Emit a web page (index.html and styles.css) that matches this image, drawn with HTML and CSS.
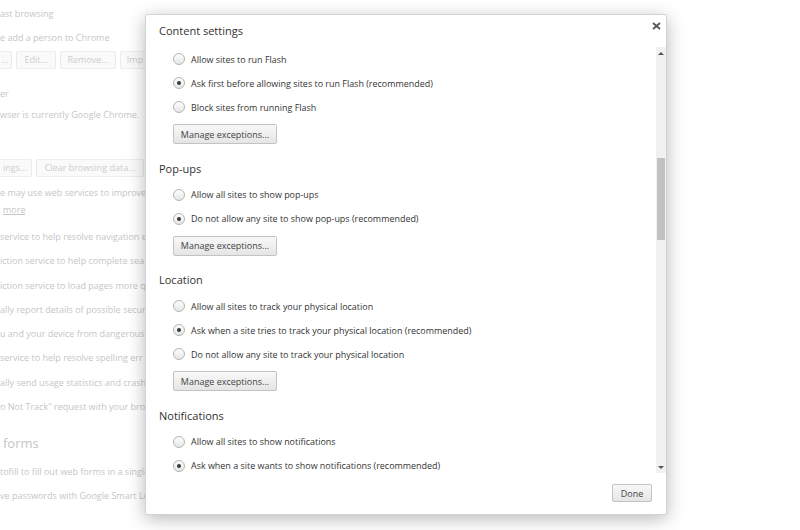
FILE: index.html
```html
<!DOCTYPE html>
<html lang="en">
<head>
    <meta charset="UTF-8">
    <title>Settings - Content settings</title>
    <link rel="stylesheet" href="styles.css">
</head>
<body>

    <div class="page">
        <div class="line first">ast browsing</div>
        <div class="line">e add a person to Chrome</div>
        <div class="btn-row">
            <span class="pbtn w12">...</span>
            <span class="pbtn w40">Edit...</span>
            <span class="pbtn w56">Remove...</span>
            <span class="pbtn w30">Imp</span>
        </div>
        <div class="line gap-lg">er</div>
        <div class="line tight">wser is currently Google Chrome.</div>
        <div class="btn-row second">
            <span class="pbtn w32">ings...</span>
            <span class="pbtn w108">Clear browsing data...</span>
        </div>
        <div class="para">
            <div>e may use web services to improve</div>
            <div><span class="link">more</span></div>
        </div>
        <div class="list">
            <div class="line">service to help resolve navigation e</div>
            <div class="line">iction service to help complete sea</div>
            <div class="line">iction service to load pages more q</div>
            <div class="line">ally report details of possible secur</div>
            <div class="line">u and your device from dangerous</div>
            <div class="line">service to help resolve spelling err</div>
            <div class="line">ally send usage statistics and crash</div>
            <div class="line">o Not Track" request with your brow</div>
        </div>
        <div class="page-heading">forms</div>
        <div class="line after-heading">tofill to fill out web forms in a single</div>
        <div class="line">ve passwords with Google Smart Lo</div>
    </div>

    <div class="dialog">
        <div class="dialog-head">
            <h1>Content settings</h1>
            <span class="close">
                <svg width="9" height="8" viewBox="0 0 9 8">
                    <path d="M1 1 L8 7 M8 1 L1 7" stroke="#555" stroke-width="1.8" fill="none"/>
                </svg>
            </span>
        </div>
        <div class="dialog-body">
            <div class="scroll">
                <div class="options">
                    <label class="opt"><span class="radio"></span>Allow sites to run Flash</label>
                    <label class="opt"><span class="radio checked"></span>Ask first before allowing sites to run Flash (recommended)</label>
                    <label class="opt"><span class="radio"></span>Block sites from running Flash</label>
                    <button class="btn manage">Manage exceptions...</button>
                </div>

                <h2>Pop-ups</h2>
                <div class="options">
                    <label class="opt"><span class="radio"></span>Allow all sites to show pop-ups</label>
                    <label class="opt"><span class="radio checked"></span>Do not allow any site to show pop-ups (recommended)</label>
                    <button class="btn manage">Manage exceptions...</button>
                </div>

                <h2>Location</h2>
                <div class="options">
                    <label class="opt"><span class="radio"></span>Allow all sites to track your physical location</label>
                    <label class="opt"><span class="radio checked"></span>Ask when a site tries to track your physical location (recommended)</label>
                    <label class="opt"><span class="radio"></span>Do not allow any site to track your physical location</label>
                    <button class="btn manage">Manage exceptions...</button>
                </div>

                <h2>Notifications</h2>
                <div class="options">
                    <label class="opt"><span class="radio"></span>Allow all sites to show notifications</label>
                    <label class="opt"><span class="radio checked"></span>Ask when a site wants to show notifications (recommended)</label>
                </div>
            </div>
            <div class="scrollbar">
                <div class="arrow up"></div>
                <div class="track"><div class="thumb"></div></div>
                <div class="arrow down"></div>
            </div>
        </div>
        <div class="dialog-foot">
            <button class="btn done">Done</button>
        </div>
    </div>

</body>
</html>
```

FILE: styles.css
```css
body {
    margin: 0;
    font-family: 'Open Sans', 'Noto Sans', sans-serif;
    background: #fff;
    width: 800px;
    height: 530px;
    overflow: hidden;
}

/* faded settings page behind the dialog */
.page {
    padding-top: 4px;
    color: #c6c6c6;
    font-size: 9px;
    white-space: nowrap;
}

.line {
    line-height: 20px;
    margin-top: 4px;
}

.line.first {
    margin-top: 0;
}

.line.gap-lg {
    margin-top: 15px;
}

.line.tight {
    margin-top: 1px;
}

.line.after-heading {
    margin-top: 7px;
}

.btn-row {
    display: flex;
    gap: 4px;
    margin-top: 3px;
    margin-left: -2px;
}

.btn-row.second {
    margin-top: 34px;
}

.pbtn {
    height: 18px;
    line-height: 16px;
    box-sizing: border-box;
    border: 1px solid #ececec;
    border-radius: 2px;
    background: #fafafa;
    text-align: center;
    color: #cdcdcd;
}

.w12 { width: 14px; }
.w40 { width: 40px; }
.w56 { width: 56px; }
.w30 { width: 30px; }
.w32 { width: 34px; }
.w108 { width: 108px; }

.para {
    line-height: 17px;
    margin-top: 7px;
}

.link {
    text-decoration: underline;
    margin-left: 3px;
}

.list {
    margin-top: 7px;
}

.list .line {
    line-height: 24.3px;
    margin-top: 0;
}

.page-heading {
    font-size: 13px;
    line-height: 24px;
    margin-top: 12px;
    margin-left: 3px;
}

/* dialog */
.dialog {
    position: absolute;
    left: 145px;
    top: 14px;
    width: 522px;
    height: 501px;
    box-sizing: border-box;
    background: #fff;
    border: 1px solid #d2d2d2;
    border-radius: 2px;
    box-shadow: 0 4px 18px rgba(0, 0, 0, 0.28);
    display: flex;
    flex-direction: column;
    color: #333;
}

.dialog-head {
    height: 32px;
    display: flex;
    align-items: center;
    justify-content: space-between;
    padding: 0 3px 0 13px;
}

.dialog-head h1 {
    margin: 0 0 2px;
    font-size: 11px;
    font-weight: normal;
    color: #333;
}

.close {
    width: 14px;
    height: 14px;
    display: flex;
    align-items: center;
    justify-content: center;
    margin-top: -11px;
}

.dialog-body {
    flex: 1;
    display: flex;
    min-height: 0;
}

.scroll {
    flex: 1;
    overflow: hidden;
    padding-left: 13px;
}

.options {
    padding-left: 14px;
}

.opt {
    display: flex;
    align-items: center;
    height: 24px;
    font-size: 8.95px;
    color: #333;
    white-space: nowrap;
}

.radio {
    width: 12px;
    height: 12px;
    box-sizing: border-box;
    border: 1px solid #b5b5b5;
    border-radius: 50%;
    background: linear-gradient(#fefefe, #e6e6e6);
    margin-right: 6px;
    display: flex;
    align-items: center;
    justify-content: center;
}

.radio.checked::after {
    content: '';
    width: 4px;
    height: 4px;
    border-radius: 50%;
    background: #3a3a3a;
}

.btn {
    font-family: inherit;
    font-size: 9px;
    color: #444;
    border: 1px solid #c3c3c3;
    border-radius: 2px;
    background: linear-gradient(#f8f8f8, #e5e5e5);
    padding: 0;
}

.manage {
    width: 104px;
    height: 20px;
    margin-top: 5px;
}

h2 {
    margin: 14.5px 0 4px;
    font-size: 11px;
    line-height: 20px;
    font-weight: normal;
    color: #333;
}

.scrollbar {
    width: 10px;
    background: #f1f1f1;
    display: flex;
    flex-direction: column;
}

.arrow {
    height: 12px;
    display: flex;
    align-items: center;
    justify-content: center;
}

.arrow::after {
    content: '';
    border-left: 3px solid transparent;
    border-right: 3px solid transparent;
}

.arrow.up::after {
    border-bottom: 3px solid #555;
}

.arrow.down::after {
    border-top: 3px solid #555;
}

.track {
    flex: 1;
    padding: 0 1px;
}

.thumb {
    margin-top: 99px;
    height: 82px;
    background: #c1c1c1;
}

.dialog-foot {
    height: 41px;
    display: flex;
    justify-content: flex-end;
    align-items: flex-start;
    padding: 11px 14px 0 0;
    box-sizing: border-box;
}

.done {
    width: 40px;
    height: 18px;
}
```
